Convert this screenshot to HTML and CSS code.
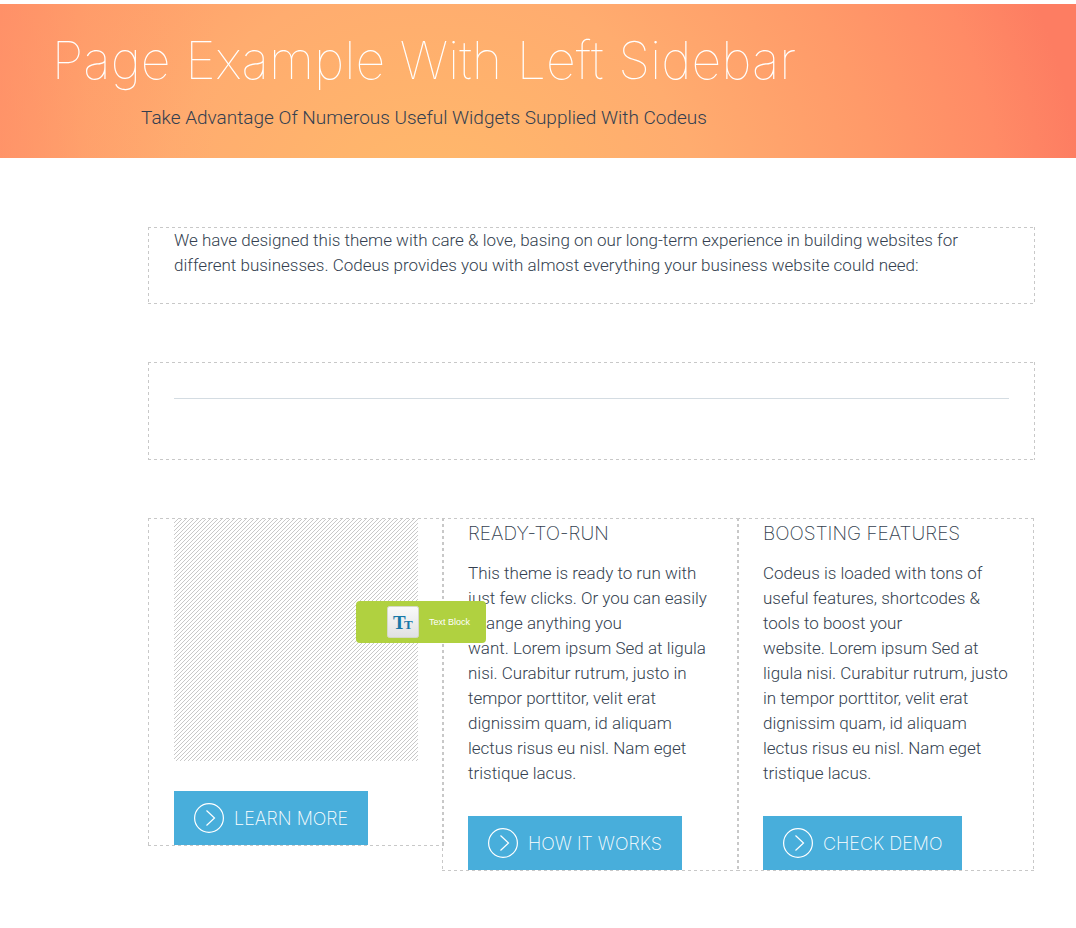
FILE: index.html
```html
<!DOCTYPE html>
<html lang="en">
<head>
<meta charset="utf-8">
<meta name="viewport" content="width=device-width, initial-scale=1">
<title>Page Example With Left Sidebar</title>
<link rel="stylesheet" href="styles.css">
</head>
<body>
<header class="hero">
  <h1 class="hero-title">Page Example With Left Sidebar</h1>
  <p class="hero-subtitle">Take Advantage Of Numerous Useful Widgets Supplied With Codeus</p>
</header>
<main class="content">
  <section class="block intro">
    <p class="copy">We have designed this theme with care &amp; love, basing on our long-term experience in building websites for<br>different businesses. Codeus provides you with almost everything your business website could need:</p>
  </section>
  <section class="block divider"><hr class="rule"></section>
  <section class="columns">
    <article class="block column">
      <div class="placeholder"></div>
      <a class="button" href="#"><svg class="button-icon" viewBox="0 0 30 30" aria-hidden="true"><circle cx="15" cy="15" r="14.4"/><path d="M12.5 7.5L20.5 15L12.5 22.5"/></svg>LEARN MORE</a>
      <div class="drag-chip">
        <svg class="chip-icon" viewBox="0 0 32 32" aria-hidden="true">
          <defs><linearGradient id="tile" x1="0" y1="0" x2="0" y2="1"><stop offset="0" stop-color="#fafafa"/><stop offset="1" stop-color="#e0e1e3"/></linearGradient></defs>
          <rect x=".5" y=".5" width="31" height="31" rx="2" fill="url(#tile)" stroke="#d5d8c8"/>
          <text class="chip-letter" x="6" y="23" font-size="19">T</text>
          <text class="chip-letter" x="17" y="23" font-size="13">T</text>
        </svg>
        <span class="chip-label">Text Block</span>
      </div>
    </article>
    <article class="block column">
      <h2 class="column-title">READY-TO-RUN</h2>
      <p class="copy">This theme is ready to run with<br>just few clicks. Or you can easily<br>change anything you<br>want. Lorem ipsum Sed at ligula<br>nisi. Curabitur rutrum, justo in<br>tempor porttitor, velit erat<br>dignissim quam, id aliquam<br>lectus risus eu nisl. Nam eget<br>tristique lacus.</p>
      <a class="button" href="#"><svg class="button-icon" viewBox="0 0 30 30" aria-hidden="true"><circle cx="15" cy="15" r="14.4"/><path d="M12.5 7.5L20.5 15L12.5 22.5"/></svg>HOW IT WORKS</a>
    </article>
    <article class="block column">
      <h2 class="column-title">BOOSTING FEATURES</h2>
      <p class="copy">Codeus is loaded with tons of<br>useful features, shortcodes &amp;<br>tools to boost your<br>website. Lorem ipsum Sed at<br>ligula nisi. Curabitur rutrum, justo<br>in tempor porttitor, velit erat<br>dignissim quam, id aliquam<br>lectus risus eu nisl. Nam eget<br>tristique lacus.</p>
      <a class="button" href="#"><svg class="button-icon" viewBox="0 0 30 30" aria-hidden="true"><circle cx="15" cy="15" r="14.4"/><path d="M12.5 7.5L20.5 15L12.5 22.5"/></svg>CHECK DEMO</a>
    </article>
  </section>
</main>
</body>
</html>
```
FILE: styles.css
```css
* { box-sizing: border-box; }
body {
  margin: 0;
  padding-top: 4px;
  background: #fff;
  color: #343f50;
  font-family: Roboto, "Liberation Sans", sans-serif;
}
h1, h2, p { margin: 0; font-weight: 300; }

.hero {
  padding: 23px 228px 28px 0;
  text-align: center;
  white-space: nowrap;
  background:
    linear-gradient(90deg, rgba(255, 140, 104, .5) 0%, rgba(255, 150, 106, .2) 8%, rgba(255, 150, 106, 0) 20%),
    radial-gradient(ellipse 680px 620px at 430px 220px, #ffba6a 0%, #ffac6f 40%, #ff9a69 66%, #ff8b66 84%, #fd7d62 96%);
}
.hero-title {
  display: flex;
  justify-content: center;
  color: #fff;
  font-family: Inter, "Liberation Sans", sans-serif;
  font-size: 52px;
  font-weight: 100;
  line-height: 68px;
}
.hero-subtitle {
  padding-top: 10px;
  font-size: 19px;
  line-height: 25px;
}

.content { margin: 69px 41px 57px 148px; }
.block {
  border: 1px solid transparent;
  padding: 0 25px;
  background:
    repeating-linear-gradient(90deg, #c8c8c8 0 3px, transparent 3px 6px) top / 100% 1px no-repeat border-box,
    repeating-linear-gradient(90deg, #c8c8c8 0 3px, transparent 3px 6px) bottom / 100% 1px no-repeat border-box,
    repeating-linear-gradient(#c8c8c8 0 3px, transparent 3px 6px) left / 1px 100% no-repeat border-box,
    repeating-linear-gradient(#c8c8c8 0 3px, transparent 3px 6px) right / 1px 100% no-repeat border-box;
}
.copy { font-size: 17px; line-height: 25px; white-space: nowrap; }
.intro { padding-bottom: 25px; }
.divider { margin: 58px 0; padding: 35px 25px 60px; }
.rule { margin: 0; border: 0; border-top: 1px solid #d4dce2; }

.columns {
  display: grid;
  grid-template-columns: repeat(3, minmax(0, 1fr));
  align-items: start;
  padding-right: 2px;
}
.column { position: relative; margin-right: -1px; }
.column + .column { margin-left: -1px; }
.column-title {
  padding: 2px 0 15px;
  font-family: Inter, "Liberation Sans", sans-serif;
  font-size: 19px;
  font-weight: 200;
  line-height: 25px;
}
.placeholder {
  height: 242px;
  background: linear-gradient(135deg, #fff 44%, #c8c8c8 44% 56%, #fff 56%) 0 0 / 4px 4px;
}
.button {
  display: flex;
  align-items: center;
  gap: 10px;
  width: fit-content;
  height: 54px;
  margin-top: 30px;
  padding: 0 20px;
  background: #48aedb;
  color: #fff;
  font-family: Inter, "Liberation Sans", sans-serif;
  font-size: 18px;
  font-weight: 200;
  text-decoration: none;
  white-space: nowrap;
}
.button-icon {
  width: 30px;
  height: 30px;
  fill: none;
  stroke: #fff;
  stroke-width: 1.2;
}
.drag-chip {
  position: absolute;
  z-index: 2;
  top: 82px;
  left: 207px;
  display: flex;
  align-items: center;
  gap: 10px;
  width: 130px;
  height: 42px;
  padding-left: 31px;
  border-radius: 4px;
  background: #b0d140;
}
.chip-icon { width: 32px; height: 32px; }
.chip-letter { fill: #1878a8; font-family: "Liberation Serif", serif; font-weight: 700; }
.chip-label { color: #fff; font-family: "Liberation Sans", sans-serif; font-size: 9px; }
```
